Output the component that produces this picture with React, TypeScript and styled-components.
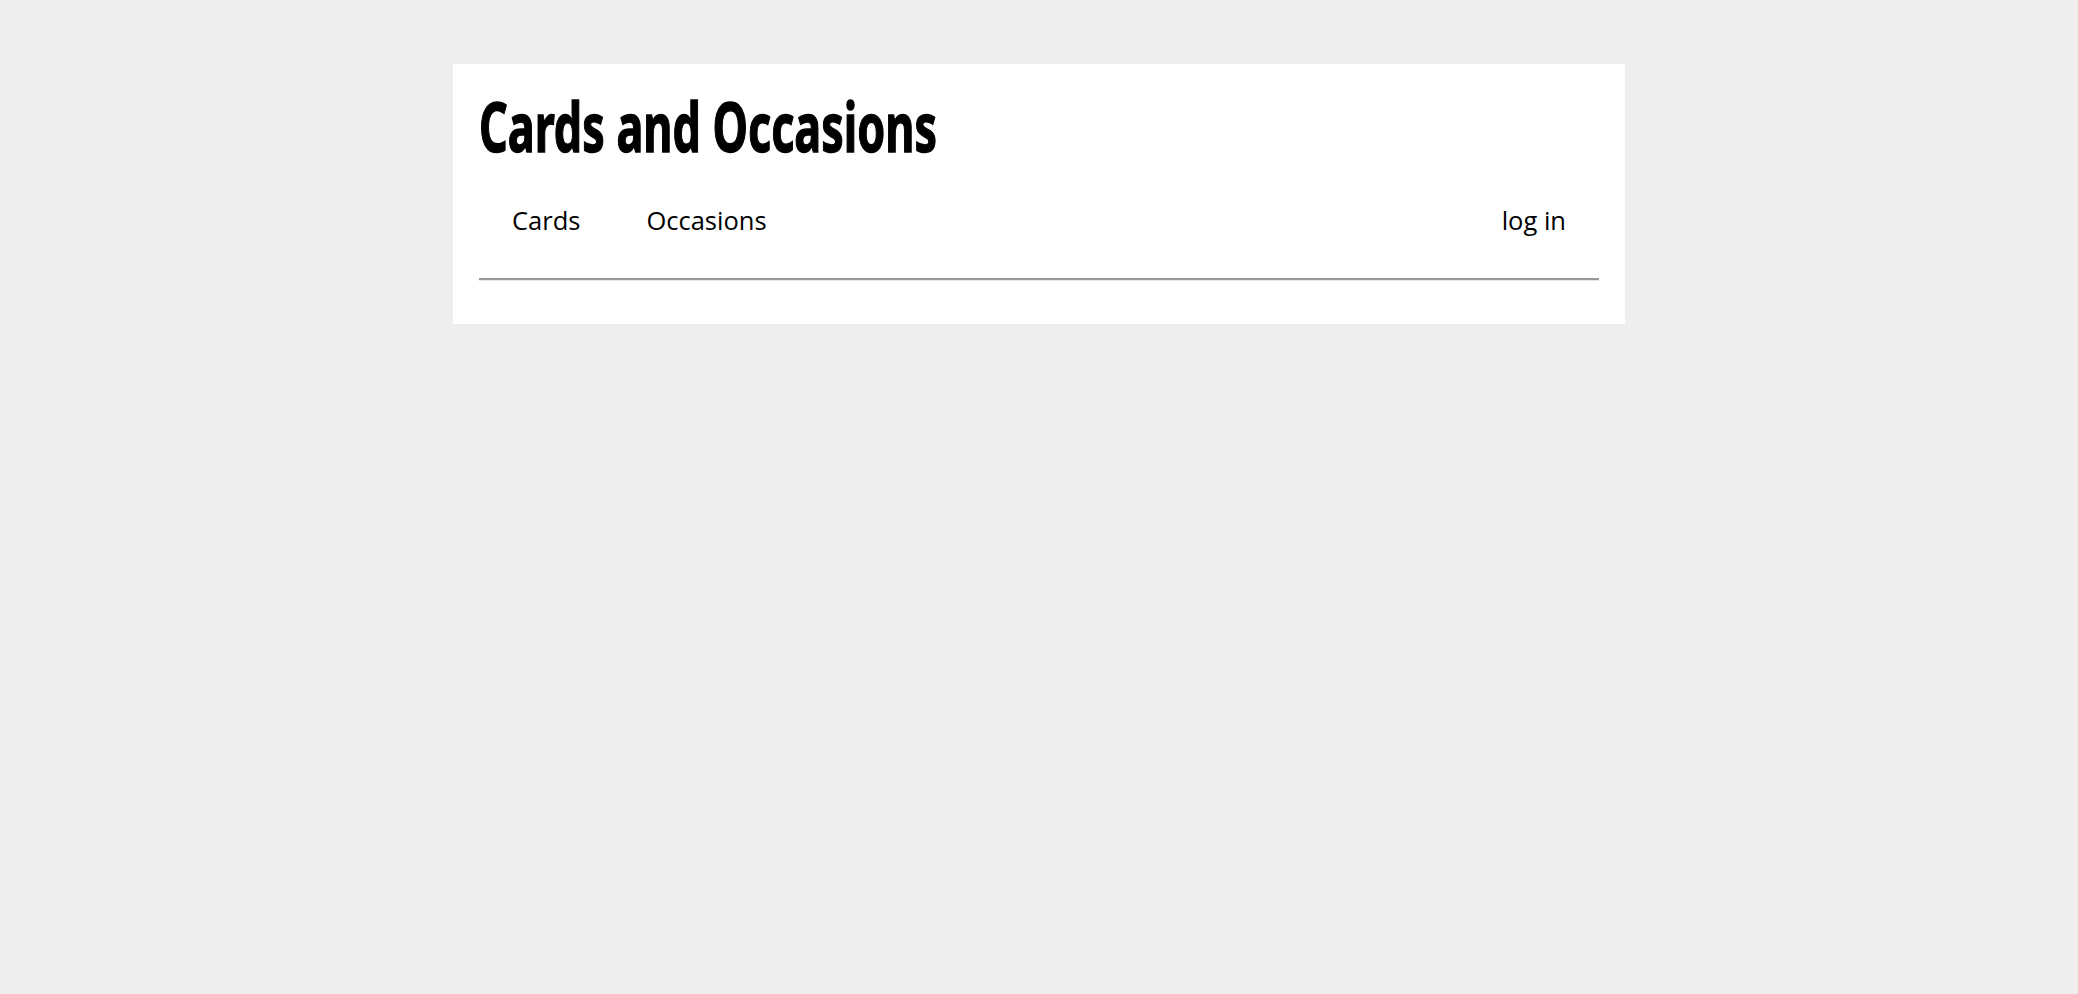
import React from "react";
import styled, { createGlobalStyle } from "styled-components";

const GlobalStyle = createGlobalStyle`
  html, body {
    margin: 0;
    padding: 0;
    background: #eeeeee;
  }
  body {
    font-family: "Open Sans", "Liberation Sans", sans-serif;
    color: #000;
  }
`;

const Page = styled.div`
  min-height: 994px;
  padding-top: 64px;
  box-sizing: border-box;
`;

const Panel = styled.header`
  width: 1172px;
  margin: 0 auto;
  background: #ffffff;
  padding: 26px 26px 44px;
  box-sizing: border-box;
`;

const Title = styled.h1`
  margin: 0;
  font-family: "Noto Sans", "DejaVu Sans Condensed", sans-serif;
  font-weight: 700;
  font-size: 68px;
  line-height: 72px;
`;

const TitleText = styled.span`
  display: inline-block;
  transform: scaleX(0.66);
  transform-origin: left center;
  -webkit-text-stroke: 1.4px #000;
  white-space: nowrap;
`;

const Nav = styled.nav`
  display: flex;
  align-items: center;
  margin-top: 41px;
  padding-bottom: 41px;
  border-bottom: 2px solid #999999;
  box-shadow: 0 1px 0 #e6e6e6;
`;

const NavLink = styled.a<{ $push?: boolean }>`
  font-size: 25.5px;
  line-height: 34px;
  padding: 0 33px;
  color: #000;
  text-decoration: none;
  margin-left: ${(p) => (p.$push ? "auto" : "0")};
`;

export default function App() {
  return (
    <>
      <GlobalStyle />
      <Page>
        <Panel>
          <Title>
            <TitleText>Cards and Occasions</TitleText>
          </Title>
          <Nav>
            <NavLink href="#">Cards</NavLink>
            <NavLink href="#">Occasions</NavLink>
            <NavLink href="#" $push>
              log in
            </NavLink>
          </Nav>
        </Panel>
      </Page>
    </>
  );
}
